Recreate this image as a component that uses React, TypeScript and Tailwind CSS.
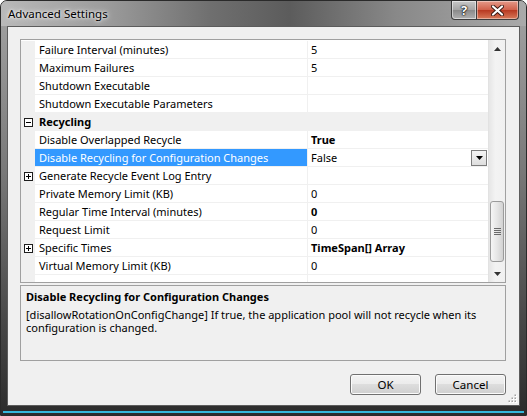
import React from 'react'

type Row = {
  name: string
  value?: string
  bold?: boolean
  expand?: 'plus' | 'minus'
  category?: boolean
  selected?: boolean
  dropdown?: boolean
}

const rows: Row[] = [
  { name: 'Failure Interval (minutes)', value: '5' },
  { name: 'Maximum Failures', value: '5' },
  { name: 'Shutdown Executable' },
  { name: 'Shutdown Executable Parameters' },
  { name: 'Recycling', category: true, expand: 'minus' },
  { name: 'Disable Overlapped Recycle', value: 'True', bold: true },
  { name: 'Disable Recycling for Configuration Changes', value: 'False', selected: true, dropdown: true },
  { name: 'Generate Recycle Event Log Entry', expand: 'plus' },
  { name: 'Private Memory Limit (KB)', value: '0' },
  { name: 'Regular Time Interval (minutes)', value: '0', bold: true },
  { name: 'Request Limit', value: '0' },
  { name: 'Specific Times', value: 'TimeSpan[] Array', bold: true, expand: 'plus' },
  { name: 'Virtual Memory Limit (KB)', value: '0' },
]

function ExpandBox({ kind }: { kind: 'plus' | 'minus' }) {
  return (
    <svg width="9" height="9" viewBox="0 0 9 9" className="block">
      <rect x="0.5" y="0.5" width="8" height="8" fill="#fff" stroke="#1e1e1e" />
      <line x1="2" y1="4.5" x2="7" y2="4.5" stroke="#000" />
      {kind === 'plus' && <line x1="4.5" y1="2" x2="4.5" y2="7" stroke="#000" />}
    </svg>
  )
}

function GridRow({ row }: { row: Row }) {
  if (row.category) {
    return (
      <div className="flex h-[18px] shrink-0 items-center bg-[#f0f0f0]">
        <div className="flex w-[14px] justify-center">
          {row.expand && <ExpandBox kind={row.expand} />}
        </div>
        <span className="pl-[4px] font-bold">{row.name}</span>
      </div>
    )
  }
  return (
    <div className="flex h-[18px] shrink-0">
      <div className="flex w-[14px] items-center justify-center bg-[#f0f0f0]">
        {row.expand && <ExpandBox kind={row.expand} />}
      </div>
      <div
        className={
          row.selected
            ? 'flex w-[273px] items-center border-b border-r border-[#f0f0f0] bg-[#3399ff] pl-[4px] text-white'
            : 'flex w-[273px] items-center border-b border-r border-[#f0f0f0] pl-[4px]'
        }
      >
        {row.name}
      </div>
      <div className="flex flex-1 items-center border-b border-[#f0f0f0] pl-[3px]">
        <span className={row.bold ? 'font-bold' : ''}>{row.value}</span>
        {row.dropdown && (
          <div className="ml-auto mr-[1px] flex h-[16px] w-[16px] items-center justify-center border border-[#7c7c7c] bg-[linear-gradient(#f4f4f4,#dedede)]">
            <svg width="7" height="4" viewBox="0 0 7 4">
              <path d="M0 0h7L3.5 4z" fill="#000" />
            </svg>
          </div>
        )}
      </div>
    </div>
  )
}

function ScrollBar() {
  return (
    <div className="flex w-[17px] flex-col border-l border-[#e2e2e2] bg-[linear-gradient(to_right,#e6e6e6,#f3f3f3_40%,#f0f0f0)]">
      <div className="flex h-[17px] items-center justify-center">
        <svg width="7" height="4" viewBox="0 0 7 4">
          <path d="M3.5 0L7 4H0z" fill="#333" />
        </svg>
      </div>
      <div className="h-[144px]" />
      <div className="mx-[1px] flex h-[61px] items-center justify-center rounded-[3px] border border-[#9b9b9b] bg-[linear-gradient(to_right,#f6f6f6,#e6e6e6_50%,#d2d2d2)]">
        <div className="flex flex-col gap-[1px]">
          <div className="h-px w-[7px] bg-[#6a6a6a]" />
          <div className="h-px w-[7px] bg-[#6a6a6a]" />
          <div className="h-px w-[7px] bg-[#6a6a6a]" />
          <div className="h-px w-[7px] bg-[#6a6a6a]" />
        </div>
      </div>
      <div className="flex-1" />
      <div className="flex h-[17px] items-center justify-center">
        <svg width="7" height="4" viewBox="0 0 7 4">
          <path d="M0 0h7L3.5 4z" fill="#333" />
        </svg>
      </div>
    </div>
  )
}

function Button({ label }: { label: string }) {
  return (
    <button
      type="button"
      className="h-[21px] w-[71px] rounded-[3px] border border-[#707070] bg-[linear-gradient(#f3f3f3,#ebebeb_48%,#dddddd_50%,#cfcfcf)] text-[11.5px] leading-none text-black shadow-[inset_0_0_0_1px_#fbfbfb]"
    >
      {label}
    </button>
  )
}

export default function App() {
  return (
    <div className="flex h-[416px] w-[527px] flex-col overflow-hidden rounded-t-[7px] border border-[#2a2a2a] bg-[linear-gradient(#a4a4a4,#7a7a7a_40%,#444444_80%,#2c2c2c)] font-['Noto_Sans',sans-serif] text-[11px] text-black">
      {/* title bar */}
      <div className="flex h-[26px] items-start bg-[linear-gradient(to_right,#b9b9b9,#9c9c9c_20%,#6f6f6f_40%,#5c5c5c_55%,#888888_75%,#aaaaaa)]">
        <span className="mt-[7px] pl-[7px] text-[11.5px] leading-none [text-shadow:0_0_6px_#ffffff,0_0_3px_#ffffff]">
          Advanced Settings
        </span>
        <div className="ml-auto mr-[7px] flex">
          <div className="flex h-[19px] w-[26px] items-center justify-center rounded-bl-[4px] border border-t-0 border-[#3c3c3c] bg-[linear-gradient(#c8c8c8,#a4a4a4_50%,#8a8a8a_52%,#b0b0b0)] shadow-[inset_0_0_0_1px_rgba(255,255,255,0.5)]">
            <span className="text-[13px] font-bold leading-none text-white [text-shadow:0_0_1px_#000,0_0_1px_#000,0_0_2px_#000]">
              ?
            </span>
          </div>
          <div className="flex h-[19px] w-[42px] items-center justify-center rounded-br-[4px] border border-l-0 border-t-0 border-[#3c3c3c] bg-[linear-gradient(#e59a8a,#d0604a_50%,#b83a22_52%,#d87a5a)] shadow-[inset_0_0_0_1px_rgba(255,255,255,0.4)]">
            <svg width="13" height="11" viewBox="0 0 13 11">
              <path d="M2 1.5l9 8M11 1.5l-9 8" stroke="#3a1a14" strokeWidth="4" strokeLinecap="round" />
              <path d="M2 1.5l9 8M11 1.5l-9 8" stroke="#ffffff" strokeWidth="2.2" strokeLinecap="round" />
            </svg>
          </div>
        </div>
      </div>

      {/* client area */}
      <div className="relative mx-[6px] flex flex-1 flex-col border border-[#5c5c5c] bg-[#f0f0f0] pb-[10px] pl-[12px] pr-[13px] pt-[12px]">
        <div className="flex h-[244px] shrink-0 border border-[#a0a0a0] bg-white">
          <div className="flex flex-1 flex-col overflow-hidden pt-[1px]">
            {rows.map((row) => (
              <GridRow key={row.name} row={row} />
            ))}
            <div className="flex h-[18px] shrink-0">
              <div className="w-[14px] bg-[#f0f0f0]" />
              <div className="w-[273px] border-r border-[#f0f0f0]" />
            </div>
          </div>
          <ScrollBar />
        </div>

        <div className="mt-[2px] h-[76px] shrink-0 border border-[#a0a0a0] px-[5px] pt-[3px]">
          <div className="font-bold leading-[15px]">Disable Recycling for Configuration Changes</div>
          <p className="mt-[4px] leading-[13px]">
            [disallowRotationOnConfigChange] If true, the application pool will not recycle when its configuration is
            changed.
          </p>
        </div>

        <div className="mt-[13px] flex justify-end gap-[14px]">
          <Button label="OK" />
          <Button label="Cancel" />
        </div>

        <svg width="11" height="11" viewBox="0 0 11 11" className="absolute bottom-[1px] right-[1px]">
          {[
            [9, 1],
            [9, 4],
            [6, 4],
            [9, 7],
            [6, 7],
            [3, 7],
          ].map(([x, y]) => (
            <g key={`${x}-${y}`}>
              <rect x={x - 1} y={y + 1} width="2" height="2" fill="#ffffff" />
              <rect x={x - 1.5} y={y + 0.5} width="1.5" height="1.5" fill="#a0a0a0" />
            </g>
          ))}
        </svg>
      </div>

      {/* bottom frame */}
      <div className="flex h-[9px] flex-col">
        <div className="h-[5px]" />
        <div className="mx-[2px] h-[2px] bg-[#35b8dc]" />
      </div>
    </div>
  )
}
